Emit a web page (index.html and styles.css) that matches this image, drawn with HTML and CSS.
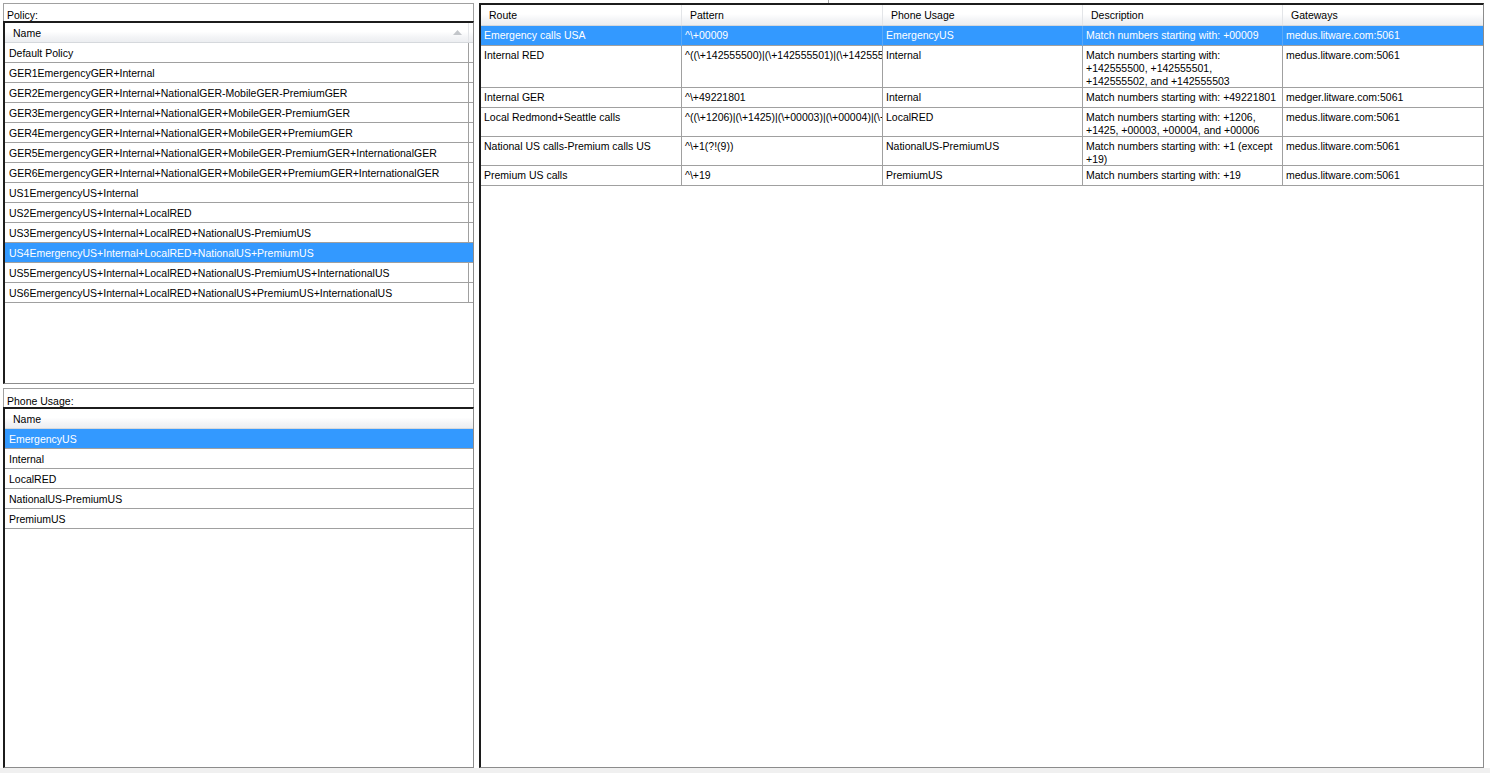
FILE: index.html
```html
<!DOCTYPE html>
<html>
<head>
<meta charset="utf-8">
<title>Voice Routing</title>
<link rel="stylesheet" href="styles.css">
</head>
<body>
<div class="app">
  <div class="topstrip"><div class="mark"></div></div>
  <div class="main">
    <div class="leftcol">
      <div class="section policy">
        <div class="label">Policy:</div>
        <div class="listbox">
          <div class="lhead">
            <div class="hcell"><span>Name</span>
              <svg class="sort" width="9" height="5" viewBox="0 0 9 5"><path d="M0 5 L4.5 0 L9 5 Z" fill="#c3c6ca"/></svg>
            </div>
          </div>
          <div class="lrow"><div class="cell">Default Policy</div></div>
          <div class="lrow"><div class="cell">GER1EmergencyGER+Internal</div></div>
          <div class="lrow"><div class="cell">GER2EmergencyGER+Internal+NationalGER-MobileGER-PremiumGER</div></div>
          <div class="lrow"><div class="cell">GER3EmergencyGER+Internal+NationalGER+MobileGER-PremiumGER</div></div>
          <div class="lrow"><div class="cell">GER4EmergencyGER+Internal+NationalGER+MobileGER+PremiumGER</div></div>
          <div class="lrow"><div class="cell">GER5EmergencyGER+Internal+NationalGER+MobileGER-PremiumGER+InternationalGER</div></div>
          <div class="lrow"><div class="cell">GER6EmergencyGER+Internal+NationalGER+MobileGER+PremiumGER+InternationalGER</div></div>
          <div class="lrow"><div class="cell">US1EmergencyUS+Internal</div></div>
          <div class="lrow"><div class="cell">US2EmergencyUS+Internal+LocalRED</div></div>
          <div class="lrow"><div class="cell">US3EmergencyUS+Internal+LocalRED+NationalUS-PremiumUS</div></div>
          <div class="lrow sel"><div class="cell">US4EmergencyUS+Internal+LocalRED+NationalUS+PremiumUS</div></div>
          <div class="lrow"><div class="cell">US5EmergencyUS+Internal+LocalRED+NationalUS-PremiumUS+InternationalUS</div></div>
          <div class="lrow"><div class="cell">US6EmergencyUS+Internal+LocalRED+NationalUS+PremiumUS+InternationalUS</div></div>
        </div>
      </div>
      <div class="section usage">
        <div class="label">Phone Usage:</div>
        <div class="listbox">
          <div class="lhead"><div class="hcell"><span>Name</span></div></div>
          <div class="lrow sel"><div class="cell">EmergencyUS</div></div>
          <div class="lrow"><div class="cell">Internal</div></div>
          <div class="lrow"><div class="cell">LocalRED</div></div>
          <div class="lrow"><div class="cell">NationalUS-PremiumUS</div></div>
          <div class="lrow"><div class="cell">PremiumUS</div></div>
        </div>
      </div>
    </div>
    <div class="grid">
      <div class="ghead">
        <div class="gh c1">Route</div>
        <div class="gh c2">Pattern</div>
        <div class="gh c3">Phone Usage</div>
        <div class="gh c4">Description</div>
        <div class="gh c5">Gateways</div>
      </div>
      <div class="grow sel">
        <div class="gc c1">Emergency calls USA</div>
        <div class="gc c2">^\+00009</div>
        <div class="gc c3">EmergencyUS</div>
        <div class="gc c4">Match numbers starting with: +00009</div>
        <div class="gc c5">medus.litware.com:5061</div>
      </div>
      <div class="grow">
        <div class="gc c1">Internal RED</div>
        <div class="gc c2">^((\+142555500)|(\+142555501)|(\+142555502)|(\+142555503))</div>
        <div class="gc c3">Internal</div>
        <div class="gc c4">Match numbers starting with:<br>+142555500, +142555501,<br>+142555502, and +142555503</div>
        <div class="gc c5">medus.litware.com:5061</div>
      </div>
      <div class="grow">
        <div class="gc c1">Internal GER</div>
        <div class="gc c2">^\+49221801</div>
        <div class="gc c3">Internal</div>
        <div class="gc c4">Match numbers starting with: +49221801</div>
        <div class="gc c5">medger.litware.com:5061</div>
      </div>
      <div class="grow">
        <div class="gc c1">Local Redmond+Seattle calls</div>
        <div class="gc c2">^((\+1206)|(\+1425)|(\+00003)|(\+00004)|(\+00006))</div>
        <div class="gc c3">LocalRED</div>
        <div class="gc c4">Match numbers starting with: +1206,<br>+1425, +00003, +00004, and +00006</div>
        <div class="gc c5">medus.litware.com:5061</div>
      </div>
      <div class="grow">
        <div class="gc c1">National US calls-Premium calls US</div>
        <div class="gc c2">^\+1(?!(9))</div>
        <div class="gc c3">NationalUS-PremiumUS</div>
        <div class="gc c4">Match numbers starting with: +1 (except<br>+19)</div>
        <div class="gc c5">medus.litware.com:5061</div>
      </div>
      <div class="grow">
        <div class="gc c1">Premium US calls</div>
        <div class="gc c2">^\+19</div>
        <div class="gc c3">PremiumUS</div>
        <div class="gc c4">Match numbers starting with: +19</div>
        <div class="gc c5">medus.litware.com:5061</div>
      </div>
    </div>
  </div>
</div>
</body>
</html>
```
FILE: styles.css
```css
html, body {
  margin: 0;
  padding: 0;
}
body {
  background: #f0f0f0;
  font-family: "Liberation Sans", Arial, sans-serif;
  font-size: 10.5px;
  color: #000;
}
.app {
  width: 1490px;
  height: 768px;
  background: #fff;
  display: flex;
  flex-direction: column;
}
.topstrip {
  height: 3px;
  flex: none;
  display: flex;
}
.topstrip .mark {
  margin-left: 828px;
  width: 1px;
  background: #a8a8a8;
}
.main {
  flex: 1;
  display: flex;
  gap: 5px;
  padding-left: 3px;
  min-height: 0;
}
.leftcol {
  width: 471px;
  flex: none;
  display: flex;
  flex-direction: column;
  gap: 4px;
}
.section {
  display: flex;
  flex-direction: column;
}
.section.policy {
  height: 381px;
  flex: none;
}
.section.usage {
  flex: 1;
}
.label {
  flex: none;
  box-sizing: border-box;
  height: 18px;
  border: 1px solid #a0a0a0;
  border-bottom: none;
  padding: 5px 0 0 3px;
  line-height: 12px;
}
.usage .label {
  height: 19px;
  padding-top: 6px;
}
.listbox {
  flex: 1;
  background: #fff;
  border-top: 2px solid #1c1c1c;
  border-left: 2px solid #1c1c1c;
  border-right: 1px solid #8c8c8c;
  border-bottom: 1px solid #8c8c8c;
}
.lhead {
  display: flex;
  height: 20px;
  box-sizing: border-box;
  border-bottom: 1px solid #d5d8dc;
  background: linear-gradient(#ffffff 0%, #ffffff 45%, #f3f4f6 75%, #eceef1 100%);
}
.lhead .hcell {
  width: 464px;
  box-sizing: border-box;
  padding: 1px 6px 0 8px;
  line-height: 18px;
  border-right: 1px solid #e3e5e8;
  display: flex;
  justify-content: space-between;
  align-items: center;
}
.usage .lhead .hcell {
  border-right: none;
}
.sort {
  display: block;
  margin-top: -2px;
}
.lrow {
  display: flex;
  height: 20px;
  box-sizing: border-box;
  border-bottom: 1px solid #a0a0a0;
}
.lrow .cell {
  width: 464px;
  box-sizing: border-box;
  padding: 1px 0 0 4px;
  line-height: 18px;
  white-space: nowrap;
  border-right: 1px solid #a0a0a0;
}
.usage .lrow .cell {
  border-right: none;
}
.lrow.sel {
  background: #3399ff;
  color: #fff;
}
.lrow.sel .cell {
  border-right-color: transparent;
}
.grid {
  width: 1005px;
  flex: none;
  box-sizing: border-box;
  background: #fff;
  border-top: 2px solid #1c1c1c;
  border-left: 2px solid #1c1c1c;
  border-right: 1px solid #8c8c8c;
  border-bottom: 1px solid #8c8c8c;
}
.ghead {
  display: flex;
  height: 21px;
  box-sizing: border-box;
  border-bottom: 1px solid #d5d8dc;
  background: linear-gradient(#ffffff 0%, #ffffff 45%, #f3f4f6 75%, #eceef1 100%);
}
.gh {
  box-sizing: border-box;
  padding: 1px 0 0 8px;
  line-height: 19px;
  border-right: 1px solid #e3e5e8;
  white-space: nowrap;
}
.c1, .c2 {
  width: 201px;
  flex: none;
}
.c3, .c4 {
  width: 200px;
  flex: none;
}
.c5 {
  flex: 1;
}
.gh.c5 {
  border-right: none;
}
.grow {
  display: flex;
  min-height: 20px;
  box-sizing: border-box;
  border-bottom: 1px solid #a0a0a0;
}
.gc {
  box-sizing: border-box;
  padding: 3px 0 0 3px;
  margin-bottom: -1px;
  line-height: 13px;
  white-space: nowrap;
  overflow: hidden;
  border-right: 1px solid #a0a0a0;
}
.gc.c5 {
  border-right: none;
}
.grow.sel {
  background: #3399ff;
  color: #fff;
}
.grow.sel .gc {
  border-right-color: #5aa9f7;
}
```
